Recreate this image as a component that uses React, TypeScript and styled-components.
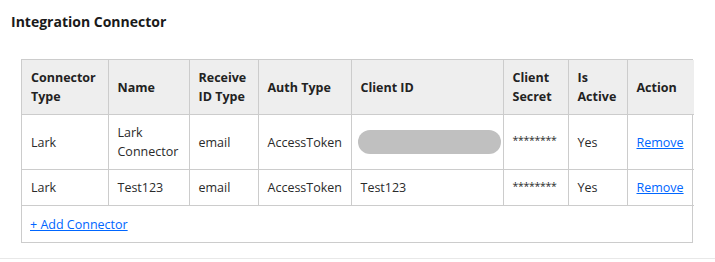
import styled, { createGlobalStyle } from 'styled-components';

const GlobalStyle = createGlobalStyle`
	body {
		margin: 0;
		background: #ffffff;
		font-family: 'Open Sans', 'Noto Sans', sans-serif;
		color: #222222;
	}
`;

const Page = styled.div`
	width: 715px;
	height: 262px;
	box-sizing: border-box;
	padding: 12px 0 0 0;
`;

const Title = styled.h2`
	margin: 0 0 0 11px;
	font-size: 14px;
	font-weight: 700;
	line-height: 19px;
	color: #1a1a1a;
`;

const Panel = styled.div`
	margin: 28px 0 0 21px;
	width: 672px;
	box-sizing: border-box;
	border: 1px solid #cccccc;
`;

const Table = styled.table`
	width: 100%;
	border-collapse: collapse;
	table-layout: fixed;
	font-size: 12.5px;
`;

const Th = styled.th<{ $w: number }>`
	width: ${(p) => p.$w}px;
	background: #eeeeee;
	text-align: left;
	font-weight: 700;
	line-height: 19px;
	padding: 8px 8px 8px 9px;
	height: 54px;
	box-sizing: border-box;
	border: 1px solid #cccccc;
	border-top: 0;
	color: #222222;
	&:first-child {
		border-left: 0;
	}
	&:last-child {
		border-right: 0;
	}
`;

const Td = styled.td`
	padding: 0 8px 0 9px;
	line-height: 19px;
	border: 1px solid #cccccc;
	color: #2a2a2a;
	&:first-child {
		border-left: 0;
	}
	&:last-child {
		border-right: 0;
	}
`;

const Row = styled.tr<{ $h: number }>`
	height: ${(p) => p.$h}px;
`;

const Masked = styled.div`
	width: 143px;
	height: 24px;
	border-radius: 12px;
	background: #c0c0c0;
	margin-left: -3px;
`;

const Secret = styled.span`
	font-size: 10.5px;
	letter-spacing: -0.3px;
	position: relative;
	top: -2px;
`;

const Link = styled.a`
	color: #0066ff;
	text-decoration: underline;
	cursor: pointer;
`;

const Footer = styled.div`
	height: 36px;
	display: flex;
	align-items: center;
	padding-left: 8px;
	font-size: 12.5px;
	border-top: 1px solid #cccccc;
	margin-top: -1px;
`;

const Divider = styled.div`
	margin-top: 15px;
	height: 1px;
	background: #e8e8e8;
`;

const columns: [string, number][] = [
	['Connector Type', 86],
	['Name', 81],
	['Receive ID Type', 69],
	['Auth Type', 93],
	['Client ID', 152],
	['Client Secret', 65],
	['Is Active', 59],
	['Action', 67],
];

const rows = [
	{ type: 'Lark', name: 'Lark Connector', idType: 'email', auth: 'AccessToken', clientId: null, h: 55 },
	{ type: 'Lark', name: 'Test123', idType: 'email', auth: 'AccessToken', clientId: 'Test123', h: 36 },
];

const App = () => {
	return (
		<Page>
			<GlobalStyle />
			<Title>Integration Connector</Title>
			<Panel>
				<Table>
					<thead>
						<tr>
							{columns.map(([label, w]) => (
								<Th key={label} $w={w}>
									{label}
								</Th>
							))}
						</tr>
					</thead>
					<tbody>
						{rows.map((r) => (
							<Row key={r.name} $h={r.h}>
								<Td>{r.type}</Td>
								<Td>{r.name}</Td>
								<Td>{r.idType}</Td>
								<Td>{r.auth}</Td>
								<Td>{r.clientId ? r.clientId : <Masked />}</Td>
								<Td>
									<Secret>********</Secret>
								</Td>
								<Td>Yes</Td>
								<Td>
									<Link>Remove</Link>
								</Td>
							</Row>
						))}
					</tbody>
				</Table>
				<Footer>
					<Link>+ Add Connector</Link>
				</Footer>
			</Panel>
			<Divider />
		</Page>
	);
};

export default App;
